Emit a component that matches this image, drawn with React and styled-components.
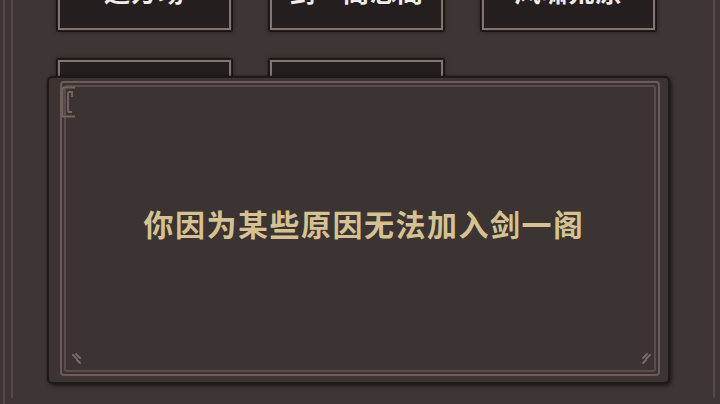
import React from "react";
import styled, { createGlobalStyle } from "styled-components";

const GlobalStyle = createGlobalStyle`
  html, body {
    margin: 0;
    padding: 0;
    background: #3d3634;
    font-family: "Noto Sans CJK SC", "Noto Sans", sans-serif;
  }
`;

const buttons = ["逐方场", "剑一阁总阁", "风啸荒原", "", ""];

const App = () => {
  return (
    <>
      <GlobalStyle />
      <Page>
        <Frame>
          <FrameInner>
            <Grid>
              {buttons.map((label, i) => (
                <MenuButton key={i}>{label}</MenuButton>
              ))}
            </Grid>
          </FrameInner>
        </Frame>

        <Dialog>
          <DialogFrame>
            <DialogInner>
              <Message>你因为某些原因无法加入剑一阁</Message>
            </DialogInner>
          </DialogFrame>
          {/* 왼쪽 위 장식 */}
          <Bracket viewBox="0 0 16 32">
            <path
              d="M1.5 1.5 H14 M1.5 1.5 V30.5 H14 M7 6 V26 M7 6 H11 V11 M7 26 H11"
              fill="none"
              stroke="#75655f"
              strokeWidth="1.8"
            />
          </Bracket>
          <Corner $side="left" viewBox="0 0 12 12">
            <path d="M2 3 L6 7 M5 2 L9 6 M6 8 L9 11" stroke="#7a6a67" strokeWidth="1.8" strokeLinecap="round" />
          </Corner>
          <Corner $side="right" viewBox="0 0 12 12">
            <path d="M10 3 L6 7 M7 2 L3 6 M6 8 L3 11" stroke="#7a6a67" strokeWidth="1.8" strokeLinecap="round" />
          </Corner>
        </Dialog>
      </Page>
    </>
  );
};

const Page = styled.div`
  position: relative;
  width: 720px;
  height: 404px;
  overflow: hidden;
  background: #3d3634;
`;

const Frame = styled.div`
  margin: -20px -3px 0 3px;
  height: 440px;
  border: 2px solid #57494a;
  padding: 0 6px;
`;

const FrameInner = styled.div`
  height: 100%;
  border-left: 2px solid #57494a;
  border-right: 2px solid #57494a;
`;

const Grid = styled.div`
  display: grid;
  grid-template-columns: repeat(3, 177px);
  column-gap: 35px;
  row-gap: 26px;
  padding-left: 43px;
  margin-top: -24px;
`;

const MenuButton = styled.div`
  height: 74px;
  box-sizing: border-box;
  background: #251e1f;
  border: 1px solid #1a1515;
  border-radius: 2px;
  box-shadow: inset 0 0 0 1px #251e1f, inset 0 0 0 3px #85746f,
    0 0 4px rgba(0, 0, 0, 0.35);
  color: #f1ece8;
  font-size: 26px;
  line-height: 26px;
  font-weight: 700;
  display: flex;
  align-items: flex-end;
  justify-content: center;
  letter-spacing: 1px;
  padding-bottom: 27px;
`;

const Dialog = styled.div`
  position: absolute;
  left: 47px;
  top: 76px;
  width: 623px;
  height: 308px;
  box-sizing: border-box;
  background: #3b3432;
  border: 2px solid #1f1a1a;
  border-radius: 6px;
  padding: 3px 8px 6px 11px;
  display: flex;
  box-shadow: 2px 2px 4px rgba(0, 0, 0, 0.45), 0 0 3px rgba(0, 0, 0, 0.4);
`;

const DialogFrame = styled.div`
  flex: 1;
  display: flex;
  border: 2px solid #6b5c5a;
  border-radius: 4px;
  padding: 2px;
`;

const DialogInner = styled.div`
  flex: 1;
  display: flex;
  align-items: center;
  justify-content: center;
  border: 2px solid #5a4c4a;
  border-radius: 3px;
  padding-bottom: 12px;
`;

const Message = styled.div`
  color: #d5c191;
  font-size: 30px;
  font-weight: 700;
  letter-spacing: 1.5px;
  padding-left: 8px;
`;

const Bracket = styled.svg`
  position: absolute;
  left: 12px;
  top: 8px;
  width: 16px;
  height: 32px;
`;

const Corner = styled.svg`
  position: absolute;
  bottom: 18px;
  width: 12px;
  height: 12px;
  ${(p) => (p.$side === "left" ? "left: 22px;" : "right: 16px;")}
`;

export default App;
